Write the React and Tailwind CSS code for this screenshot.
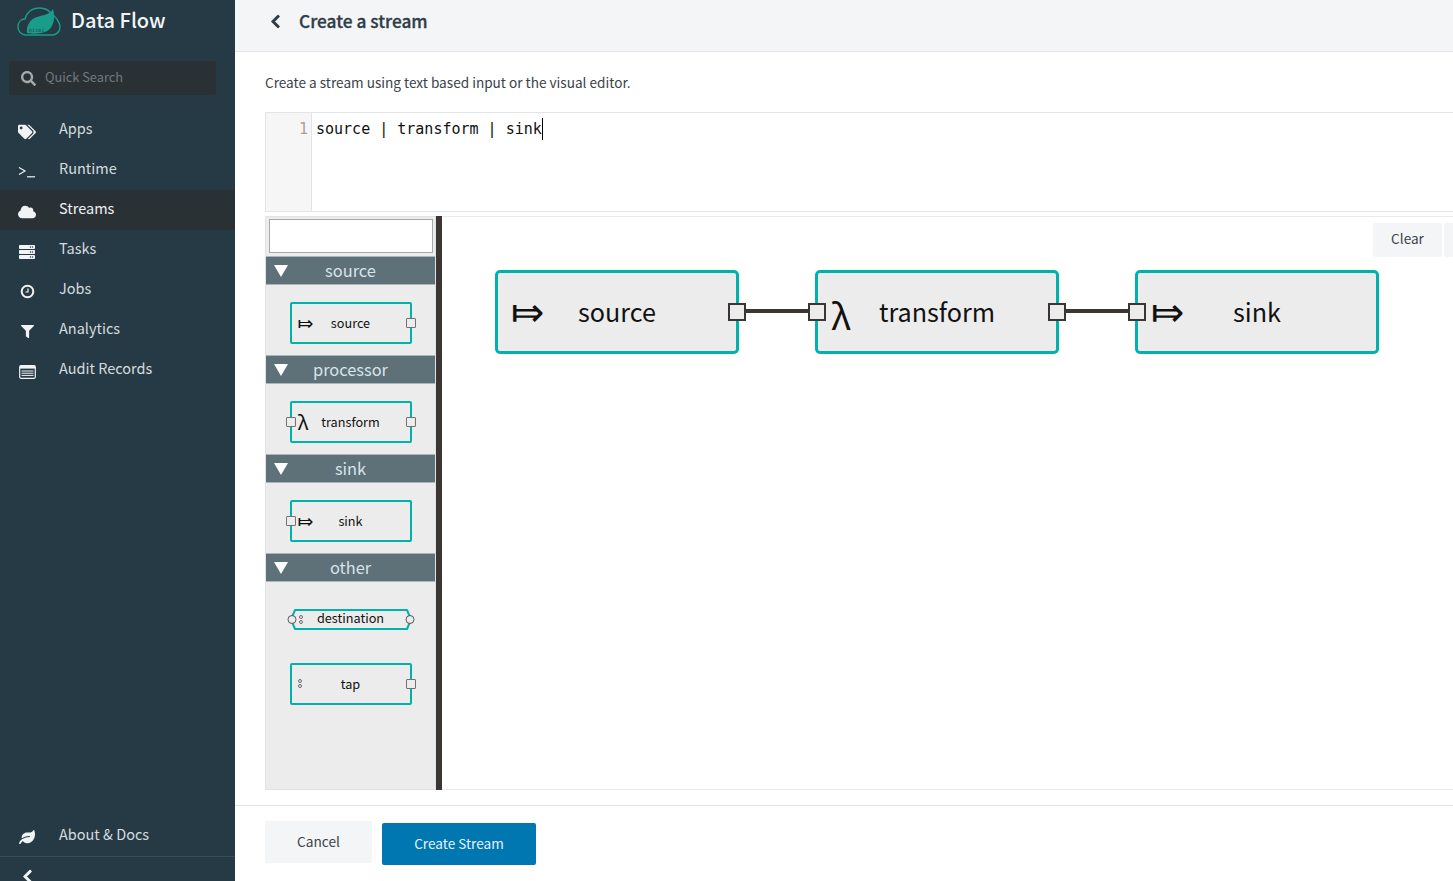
import { FaTags, FaCloud, FaServer, FaFilter, FaLeaf, FaSearch, FaChevronLeft } from "react-icons/fa";

function TerminalIcon() {
  return (
    <svg width="18" height="12" viewBox="0 0 18 12" fill="none" stroke="currentColor" strokeWidth="1.2">
      <path d="M1 1.5 L7 5 L1 8.5" />
      <path d="M9 10.8 H17" />
    </svg>
  );
}

function ClockIcon() {
  return (
    <svg width="15" height="15" viewBox="0 0 15 15" fill="none" stroke="currentColor">
      <circle cx="7.5" cy="7.5" r="5.8" strokeWidth="2" />
      <path d="M8 4.5 V8 H5.5" strokeWidth="1.2" />
    </svg>
  );
}

function RecordsIcon() {
  return (
    <svg width="17" height="14" viewBox="0 0 17 14" fill="none" stroke="currentColor">
      <rect x="0.7" y="0.7" width="15.6" height="12.6" rx="1.2" strokeWidth="1.2" />
      <rect x="1" y="1" width="15" height="2.6" fill="currentColor" stroke="none" />
      <path d="M2.5 6 H14.5 M2.5 8.2 H14.5 M2.5 10.4 H14.5" strokeWidth="1" />
    </svg>
  );
}

function Logo() {
  return (
    <svg width="46" height="32" viewBox="0 0 46 32">
      <path
        d="M9 29 C4 29 1 25 1 21 C1 16 4 13 8 13 C10 6 15 2 22 2 C26 2 30 3 33 6 C40 12 43 17 43 21 C43 26 39 29 35 29 Z"
        fill="none"
        stroke="#1a9c8a"
        strokeWidth="1.4"
      />
      <path d="M10 27 C9 20 13 13 20 11 C27 9 33 8 36 3 C39 12 36 24 28 26 C22 28 14 28 10 27 Z" fill="#1a9c8a" />
      <text x="12" y="26" fontSize="4.5" fontFamily="DejaVu Sans Mono" fill="#263a45" letterSpacing="0.4">
        01101
      </text>
    </svg>
  );
}

const navItems = [
  { label: "Apps", icon: <FaTags size={18} /> },
  { label: "Runtime", icon: <TerminalIcon /> },
  { label: "Streams", icon: <FaCloud size={18} />, active: true },
  { label: "Tasks", icon: <FaServer size={16} /> },
  { label: "Jobs", icon: <ClockIcon /> },
  { label: "Analytics", icon: <FaFilter size={13} /> },
  { label: "Audit Records", icon: <RecordsIcon /> },
];

function NavRow({ label, icon, active, labelClass = "-top-[2px]" }) {
  return (
    <div className={`flex h-10 items-center text-[14.5px] leading-5 ${active ? "bg-[#2a3135] text-[#f0f2f3]" : "text-[#d5dcdf]"}`}>
      <span className="flex w-[59px] justify-center pl-[1px] pr-[6px] pt-[3px] text-[#f1f3f4]">
        <span className="flex w-[18px] justify-center">{icon}</span>
      </span>
      <span className={`relative ${labelClass}`}>{label}</span>
    </div>
  );
}

function Sidebar() {
  return (
    <aside className="flex h-full w-[235px] shrink-0 flex-col overflow-hidden bg-[#263a45]">
      <div className="flex h-[41px] items-start pl-[17px] pt-[6px]">
        <Logo />
        <span className="ml-[8px] text-[20px] font-medium leading-[28px] text-[#f2f5f7]">Data Flow</span>
      </div>
      <div className="mx-[9px] mt-[20px] flex h-[34px] w-[207px] items-center rounded-[2px] bg-[#2a3135] pl-[12px]">
        <FaSearch size={15} className="text-[#a4a9ab]" />
        <span className="ml-[9px] -mt-[3px] text-[12.8px] text-[#717a7e]">Quick Search</span>
      </div>
      <nav className="mt-[15px]">
        {navItems.map((item) => (
          <NavRow key={item.label} {...item} />
        ))}
      </nav>
      <div className="flex-1" />
      <NavRow label="About & Docs" labelClass="-top-[1px]" icon={<FaLeaf size={16} />} />
      <div className="mt-[1px] h-[25px] border-t border-[#3d4d57] pl-[20px] pt-[12px] text-[#f1f3f4]">
        <FaChevronLeft size={15} stroke="currentColor" strokeWidth={30} />
      </div>
    </aside>
  );
}

function TapDots() {
  return (
    <span className="flex flex-col items-center gap-[0.5px]">
      <span className="h-[4px] w-[4px] rounded-full border border-[#6b6b6b]" />
      <span className="h-[4px] w-[4px] rounded-full border border-[#6b6b6b]" />
    </span>
  );
}

function Port({ side }) {
  const pos = side === "left" ? "-left-[6px]" : "-right-[6px]";
  return <span className={`absolute top-[14px] h-[10px] w-[10px] rounded-[1px] border border-[#77716d] bg-[#ececec] ${pos}`} />;
}

function PaletteNode({ label, icon, left, right }) {
  return (
    <div className="relative mx-auto flex h-[42px] w-[122px] items-center justify-center rounded-[2px] border-2 border-[#00b3aa] bg-[#ececec] text-[12.7px] leading-none text-[#111]">
      {left && <Port side="left" />}
      {right && <Port side="right" />}
      <span className="absolute left-[6px] top-[9px] flex h-[20px] items-center leading-none">{icon}</span>
      <span>{label}</span>
    </div>
  );
}

function ArrowGlyph() {
  return <span className="font-['DejaVu_Sans',sans-serif] text-[19px]">⤇</span>;
}

function Group({ title, children, height = "h-[70px]" }) {
  return (
    <section>
      <div className="relative flex h-[29px] items-center justify-center border-y border-[#a9b6bb] bg-[#5e7078] text-[16.4px] text-[#d8e4e9]">
        <span className="absolute left-[8px] top-[8px] h-0 w-0 border-x-[7px] border-t-[12px] border-x-transparent border-t-white" />
        <span>{title}</span>
      </div>
      <div className={`${height} pt-[17px]`}>{children}</div>
    </section>
  );
}

function DestinationNode() {
  return (
    <div className="relative mx-auto h-[21px] w-[122px]">
      <svg width="122" height="21" viewBox="0 0 122 21" className="absolute left-0 top-0 overflow-visible">
        <polygon points="5,1 117,1 121,10.5 117,20 5,20 1,10.5" fill="#ececec" stroke="#00b3aa" strokeWidth="2" strokeLinejoin="round" />
        <circle cx="2" cy="10.5" r="4" fill="#ececec" stroke="#555" />
        <circle cx="120" cy="10.5" r="4" fill="#ececec" stroke="#555" />
      </svg>
      <span className="absolute left-[9px] top-[6px]">
        <TapDots />
      </span>
      <span className="absolute inset-x-0 top-[1px] text-center text-[12.7px] leading-4 text-[#111]">destination</span>
    </div>
  );
}

function TapNode() {
  return (
    <div className="relative mx-auto mt-[33px] flex h-[42px] w-[122px] items-center justify-center rounded-[2px] border-2 border-[#00b3aa] bg-[#ececec] text-[12.7px] text-[#111]">
      <Port side="right" />
      <span className="absolute left-[6px] top-[14px]">
        <TapDots />
      </span>
      <span>tap</span>
    </div>
  );
}

function Palette() {
  return (
    <div className="flex h-full w-[171px] shrink-0 flex-col border border-[#dfe3e5] bg-[#ececec] pt-[2px]">
      <input className="mx-[3px] mb-[3px] h-[34px] w-[164px] shrink-0 border border-[#a9a9a9] bg-white" />
      <Group title="source">
        <PaletteNode label="source" right icon={<ArrowGlyph />} />
      </Group>
      <Group title="processor">
        <PaletteNode label="transform" left right icon={<span className="text-[20px]">λ</span>} />
      </Group>
      <Group title="sink">
        <PaletteNode label="sink" left icon={<ArrowGlyph />} />
      </Group>
      <Group title="other" height="h-auto">
        <div className="pt-[10px]">
          <DestinationNode />
          <TapNode />
        </div>
      </Group>
    </div>
  );
}

// nodes of the flow diagram sit at their own canvas coordinates
function CanvasNode({ x, label, icon, left, right }) {
  return (
    <div
      className="absolute top-[53px] h-[84px] w-[244px] rounded-[5px] border-[3.5px] border-[#00b3aa] bg-[#ececec] text-[25.2px] leading-none text-[#111]"
      style={{ left: x }}
    >
      {icon}
      <span className="absolute left-[39px] top-[26px] w-[160px] text-center">{label}</span>
      {left && <span className="absolute -left-[10px] top-[30px] h-[18px] w-[18px] border-2 border-[#3b3633] bg-[#ececec]" />}
      {right && <span className="absolute -right-[10px] top-[30px] h-[18px] w-[18px] border-2 border-[#3b3633] bg-[#ececec]" />}
    </div>
  );
}

function Canvas() {
  const arrow = (
    <span className="absolute left-[13px] top-[24px] font-['DejaVu_Sans',sans-serif] text-[40px] leading-[30px]">⤇</span>
  );
  return (
    <div className="relative h-full flex-1 overflow-hidden border-y border-[#e8eaec] bg-white">
      <div className="absolute left-[1px] top-[6px] flex gap-[2px] pl-[930px]">
        <button className="h-[34px] w-[69px] rounded-[2px] bg-[#f4f5f7] pb-[4px] text-[13.6px] text-[#39424a]">Clear</button>
        <button className="h-[34px] w-[40px] rounded-[2px] bg-[#f4f5f7]" />
      </div>
      <div className="absolute left-[304px] top-[92px] h-[4px] w-[64px] bg-[#3b3633]" />
      <div className="absolute left-[624px] top-[92px] h-[4px] w-[64px] bg-[#3b3633]" />
      <CanvasNode x={53} label="source" right icon={arrow} />
      <CanvasNode x={373} label="transform" left right icon={<span className="absolute left-[13px] top-[21px] text-[36px] leading-[40px]">λ</span>} />
      <CanvasNode x={693} label="sink" left icon={arrow} />
    </div>
  );
}

function Editor() {
  return (
    <div className="flex h-[100px] border-y border-l border-[#e2e5e7] bg-white font-['DejaVu_Sans_Mono',monospace] text-[15px] leading-[18px]">
      <div className="w-[46px] shrink-0 border-r border-[#e2e5e7] bg-[#f6f6f6] pr-[3px] pt-[7px] text-right text-[#a9a2a0]">1</div>
      <div className="flex items-start pl-[4px] pt-[7px] text-[#111]">
        <span className="whitespace-pre">source | transform | sink</span>
        <span className="-mt-[2px] h-[22px] w-[1px] bg-black" />
      </div>
    </div>
  );
}

export default function App() {
  return (
    <div className="flex h-[881px] w-[1453px] overflow-hidden bg-white font-['Noto_Sans_CJK_SC','Source_Sans_Pro',sans-serif]">
      <Sidebar />
      <main className="flex min-w-0 flex-1 flex-col">
        <header className="flex h-[52px] shrink-0 items-center border-b border-[#dfe3e6] bg-[#f4f5f7] pb-[8px] pl-[33px] text-[#2f3d47]">
          <FaChevronLeft size={15} stroke="currentColor" strokeWidth={30} />
          <h1 className="ml-[16px] -mt-[2px] text-[17.3px] font-medium leading-7 [-webkit-text-stroke:0.3px]">Create a stream</h1>
        </header>
        <div className="flex flex-1 flex-col pl-[30px]">
          <p className="mt-[20px] h-[40px] text-[13.6px] leading-5 text-[#39424a]">Create a stream using text based input or the visual editor.</p>
          <Editor />
          <div className="mt-[4px] flex h-[574px]">
            <Palette />
            <div className="h-full w-[6px] shrink-0 bg-[#3b3633]" />
            <Canvas />
          </div>
        </div>
        <footer className="flex h-[76px] shrink-0 items-start gap-[10px] border-t border-[#dfe3e6] pl-[30px] pt-[15px]">
          <button className="h-[42px] w-[107px] rounded-[2px] bg-[#f4f5f7] pb-[2px] text-[13.7px] text-[#39424a]">Cancel</button>
          <button className="mt-[2px] h-[42px] w-[154px] rounded-[2px] bg-[#0077b0] pb-[2px] text-[13.6px] text-[#e6f3f9]">Create Stream</button>
        </footer>
      </main>
    </div>
  );
}
